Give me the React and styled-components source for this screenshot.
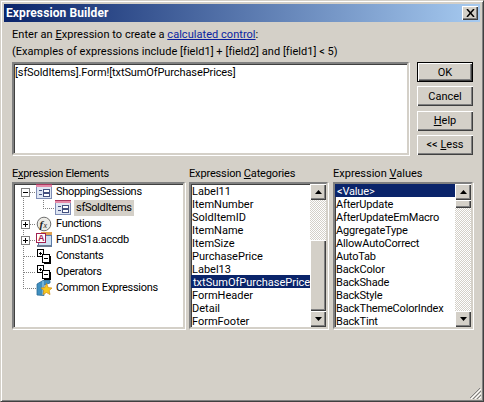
import React from "react";
import styled, { createGlobalStyle, css } from "styled-components";

const Global = createGlobalStyle`
  html, body { margin: 0; padding: 0; background: #d4d0c8; }
  #root { width: 484px; height: 402px; }
  * { box-sizing: border-box; }
`;

const sunken = css`
  border-style: solid;
  border-width: 2px;
  border-color: #808080 #d4d0c8 #d4d0c8 #808080;
  box-shadow: inset 1px 1px 0 #404040, 1px 1px 0 #fff, -1px -1px 0 0 #d4d0c8;
`;

const raised = css`
  background: #d4d0c8;
  border: 0;
  box-shadow: inset 1px 1px 0 #fff, inset -1px -1px 0 #404040, inset -2px -2px 0 #808080;
`;

const Window = styled.div`
  position: relative;
  width: 484px;
  height: 402px;
  display: flex;
  flex-direction: column;
  background: #d4d0c8;
  padding: 2px;
  border: 1px solid;
  border-color: #d4d0c8 #404040 #404040 #d4d0c8;
  box-shadow: inset 1px 1px 0 #fff, inset -1px -1px 0 #808080;
  font-family: Roboto, "Liberation Sans", sans-serif;
  font-size: 11px;
  color: #000;
`;

const TitleBar = styled.div`
  height: 18px;
  margin: 1px 1px 0 1px;
  padding: 0 2px;
  display: flex;
  align-items: center;
  justify-content: space-between;
  background: linear-gradient(90deg, #0a246a, #a6caf0);
`;

const Title = styled.span`
  color: #fff;
  font-weight: 700;
  font-size: 12px;
  letter-spacing: 0.1px;
`;

const CloseButton = styled.button`
  ${raised}
  width: 16px;
  height: 14px;
  padding: 0;
  display: flex;
  align-items: center;
  justify-content: center;
`;

const Content = styled.div`
  flex: 1;
  display: flex;
  flex-direction: column;
  padding: 4px 8px 0 9px;
`;

const Intro = styled.div`
  line-height: 17px;
  height: 17px;
  letter-spacing: 0.04px;
  white-space: nowrap;
`;

const U = styled.span`
  text-decoration: underline;
`;

const HelpLink = styled.span`
  color: #0a1fa0;
  text-decoration: underline;
`;

const TopRow = styled.div`
  margin-top: 2px;
  display: flex;
  justify-content: space-between;
  height: 93px;
`;

const Editor = styled.div`
  ${sunken}
  width: 397px;
  height: 93px;
  background: #fff;
  padding: 2px 1px;
  line-height: 13px;
  letter-spacing: -0.1px;
`;

const ButtonColumn = styled.div`
  width: 56px;
  display: flex;
  flex-direction: column;
  justify-content: space-between;
`;

const DialogButton = styled.button`
  ${raised}
  height: 20px;
  width: 56px;
  padding: 0;
  font: inherit;
  color: #000;
  ${(p) =>
    p.$primary &&
    css`
      box-shadow: inset 0 0 0 1px #000, inset 2px 2px 0 #fff, inset -2px -2px 0 #404040, inset -3px -3px 0 #808080;
    `}
`;

const Panels = styled.div`
  margin-top: 11px;
  display: grid;
  grid-template-columns: 173px 139px 140px;
  column-gap: 4px;
`;

const Panel = styled.div`
  display: flex;
  flex-direction: column;
  &:last-child {
    margin-left: 1px;
    width: 140px;
  }
`;

const PanelLabel = styled.div`
  height: 16px;
  line-height: 16px;
  letter-spacing: ${(p) => p.$tracking || 0}px;
  white-space: nowrap;
`;

const TreeBox = styled.div`
  ${sunken}
  height: 147px;
  background: #fff;
`;

const TreeRowWrap = styled.div`
  height: 16px;
  display: flex;
  align-items: center;
  white-space: nowrap;
`;

const Gutter = styled.svg`
  flex: none;
  display: block;
`;

const TreeLabel = styled.span`
  margin-left: 2px;
  padding: 0 2px;
  height: 16px;
  line-height: 16px;
  letter-spacing: -0.3px;
  background: ${(p) => (p.$selected ? "#d4d0c8" : "transparent")};
`;

const ListBox = styled.div`
  ${sunken}
  height: 147px;
  background: #fff;
  display: flex;
`;

const ListRows = styled.div`
  flex: 1;
  min-width: 0;
  letter-spacing: ${(p) => p.$tracking || 0}px;
`;

const ListRow = styled.div`
  height: 13px;
  line-height: 15px;
  padding-left: ${(p) => (p.$selected ? "2px" : "1px")};
  white-space: nowrap;
  background: ${(p) => (p.$selected ? "#0a246a" : "transparent")};
  color: ${(p) => (p.$selected ? "#fff" : "#000")};
`;

const Scrollbar = styled.div`
  flex: none;
  width: 16px;
  display: flex;
  flex-direction: column;
`;

const ScrollButton = styled.div`
  ${raised}
  flex: none;
  height: 16px;
  width: 16px;
  display: flex;
  align-items: center;
  justify-content: center;
`;

const Track = styled.div`
  flex: none;
  height: ${(p) => p.$size}px;
  background-image: conic-gradient(#fff 25%, #d4d0c8 0 50%, #fff 0 75%, #d4d0c8 0);
  background-size: 2px 2px;
`;

const Thumb = styled.div`
  ${raised}
  flex: none;
  width: 16px;
  height: ${(p) => p.$size}px;
`;

const Grip = styled.svg`
  position: absolute;
  right: 2px;
  bottom: 2px;
`;

const Line = ({ d }) => <path d={d} fill="none" stroke="#808080" strokeDasharray="1 1" shapeRendering="crispEdges" />;

const Expander = ({ x, y, minus }) => (
  <g shapeRendering="crispEdges">
    <rect x={x + 0.5} y={y + 0.5} width="8" height="8" fill="#fff" stroke="#808080" />
    <path d={`M${x + 2} ${y + 4.5}H${x + 7}`} stroke="#000" />
    {!minus && <path d={`M${x + 4.5} ${y + 2}V${y + 7}`} stroke="#000" />}
  </g>
);

const FormIcon = ({ x }) => (
  <g transform={`translate(${x} 0)`} shapeRendering="crispEdges">
    <rect x="0.5" y="0.5" width="15" height="14" fill="#dfe6f3" stroke="#7f8db5" />
    <rect x="0" y="0" width="16" height="1" fill="#a8365f" />
    <rect x="0" y="1" width="16" height="2" fill="#e48aa8" />
    <path d="M2.5 6.5h3M2.5 10.5h3" stroke="#44507f" />
    <rect x="7.5" y="5.5" width="6" height="3" fill="#fff" stroke="#44507f" />
    <rect x="7.5" y="9.5" width="6" height="3" fill="#fff" stroke="#44507f" />
  </g>
);

const FxIcon = ({ x }) => (
  <g transform={`translate(${x} 0)`}>
    <circle cx="8" cy="8" r="6.8" fill="#ecebe6" stroke="#6f6f6f" />
    <text x="3.6" y="11.5" fontFamily="Liberation Serif, serif" fontStyle="italic" fontWeight="700" fontSize="11" fill="#222">f</text>
    <text x="7.6" y="12" fontFamily="Liberation Serif, serif" fontStyle="italic" fontSize="8" fill="#222">x</text>
  </g>
);

const DbIcon = ({ x }) => (
  <g transform={`translate(${x} 0)`} shapeRendering="crispEdges">
    <rect x="5" y="0" width="11" height="3" fill="#e0a050" />
    <rect x="2.5" y="3.5" width="13" height="11" fill="#cfe0f2" stroke="#5a7aa8" />
    <rect x="0.5" y="1.5" width="9" height="9" fill="#fff" stroke="#a02050" />
    <text x="2" y="9.4" fontFamily="Liberation Sans, sans-serif" fontWeight="700" fontSize="9" fill="#a02050">A</text>
    <rect x="1" y="13" width="14" height="2" fill="#6c7a90" />
  </g>
);

const PairIcon = ({ x }) => (
  <g transform={`translate(${x} 0)`} shapeRendering="crispEdges">
    <rect x="1.5" y="1.5" width="6" height="7" fill="#fff" stroke="#000" />
    <path d="M3 5H6M4.5 3.5V6.5" stroke="#000" />
    <rect x="6.5" y="6.5" width="7" height="8" fill="#fff" stroke="#000" />
    <path d="M8 10.5H12M14.5 7.5V15.5H7.5" stroke="#000" fill="none" />
  </g>
);

const BookIcon = ({ x }) => (
  <g transform={`translate(${x} 0)`}>
    <path d="M1 4L7 0.5H14V3L8 5V15.5L1 15Z" fill="#3f8fc0" stroke="#2a6a96" strokeWidth="0.8" />
    <path d="M7 1V15" stroke="#a8d4ee" />
    <path d="M10.5 3.5L12.2 7.6L16 8L13.2 10.6L14 14.6L10.5 12.5L7 14.6L7.8 10.6L5 8L8.8 7.6Z" fill="#f6c81e" stroke="#d08a10" strokeWidth="0.7" />
  </g>
);

const treeRows = [
  { label: "ShoppingSessions", gutter: (
    <>
      <Line d="M9.5 12V16" />
      <Line d="M16 8.5H22" />
      <Expander x={7} y={4} minus />
      <FormIcon x={22} />
    </>
  ) },
  { label: "sfSoldItems", selected: true, gutter: (
    <>
      <Line d="M9.5 0V16" />
      <Line d="M29.5 0V8.5H41" />
      <FormIcon x={41} />
    </>
  ) },
  { label: "Functions", gutter: (
    <>
      <Line d="M9.5 0V16" />
      <Line d="M16 8.5H22" />
      <Expander x={7} y={4} />
      <FxIcon x={22} />
    </>
  ) },
  { label: "FunDS1a.accdb", gutter: (
    <>
      <Line d="M9.5 0V16" />
      <Line d="M16 8.5H22" />
      <Expander x={7} y={4} />
      <DbIcon x={22} />
    </>
  ) },
  { label: "Constants", gutter: (
    <>
      <Line d="M9.5 0V16M10 8.5H22" />
      <PairIcon x={22} />
    </>
  ) },
  { label: "Operators", gutter: (
    <>
      <Line d="M9.5 0V16M10 8.5H22" />
      <PairIcon x={22} />
    </>
  ) },
  { label: "Common Expressions", gutter: (
    <>
      <Line d="M9.5 0V8.5H22" />
      <BookIcon x={22} />
    </>
  ) },
];

const categories = ["Label11","ItemNumber","SoldItemID","ItemName","ItemSize","PurchasePrice","Label13","txtSumOfPurchasePrices","FormHeader","Detail","FormFooter"];
const values = ["<Value>","AfterUpdate","AfterUpdateEmMacro","AggregateType","AllowAutoCorrect","AutoTab","BackColor","BackShade","BackStyle","BackThemeColorIndex","BackTint"];

const Arrow = ({ down }) => (
  <svg width="7" height="4" viewBox="0 0 7 4">
    <path d={down ? "M0 0H7L3.5 4Z" : "M3.5 0L7 4H0Z"} fill="#000" />
  </svg>
);

const Bar = ({ before, thumb, after }) => (
  <Scrollbar>
    <ScrollButton><Arrow /></ScrollButton>
    <Track $size={before} />
    <Thumb $size={thumb} />
    <Track $size={after} />
    <ScrollButton><Arrow down /></ScrollButton>
  </Scrollbar>
);

const List = ({ items, selected, bar, tracking }) => (
  <ListBox>
    <ListRows $tracking={tracking}>
      {items.map((t) => (
        <ListRow key={t} $selected={t === selected}>{t}</ListRow>
      ))}
    </ListRows>
    {bar}
  </ListBox>
);

export default function App() {
  return (
    <Window>
      <Global />
      <TitleBar>
        <Title>Expression Builder</Title>
        <CloseButton aria-label="Close">
          <svg width="9" height="8" viewBox="0 0 9 8">
            <path d="M1 0L8 8M8 0L1 8" stroke="#000" strokeWidth="1.5" />
          </svg>
        </CloseButton>
      </TitleBar>
      <Content>
        <Intro>Enter an <U>E</U>xpression to create a <HelpLink>calculated control</HelpLink>:</Intro>
        <Intro>(Examples of expressions include [field1] + [field2] and [field1] &lt; 5)</Intro>
        <TopRow>
          <Editor>[sfSoldItems].Form![txtSumOfPurchasePrices]</Editor>
          <ButtonColumn>
            <DialogButton $primary>OK</DialogButton>
            <DialogButton>Cancel</DialogButton>
            <DialogButton><U>H</U>elp</DialogButton>
            <DialogButton>&lt;&lt; <U>L</U>ess</DialogButton>
          </ButtonColumn>
        </TopRow>
        <Panels>
          <Panel>
            <PanelLabel $tracking={-0.27}>E<U>x</U>pression Elements</PanelLabel>
            <TreeBox>
              {treeRows.map((r) => (
                <TreeRowWrap key={r.label}>
                  <Gutter width={r.selected ? 58 : 38} height="16" viewBox={`0 0 ${r.selected ? 58 : 38} 16`}>
                    {r.gutter}
                  </Gutter>
                  <TreeLabel $selected={r.selected}>{r.label}</TreeLabel>
                </TreeRowWrap>
              ))}
            </TreeBox>
          </Panel>
          <Panel>
            <PanelLabel $tracking={-0.15}>Expression <U>C</U>ategories</PanelLabel>
            <List items={categories} selected="txtSumOfPurchasePrices" bar={<Bar before={40} thumb={71} after={0} />} />
          </Panel>
          <Panel>
            <PanelLabel>Expression <U>V</U>alues</PanelLabel>
            <List tracking={-0.17} items={values} selected="<Value>" bar={<Bar before={0} thumb={8} after={103} />} />
          </Panel>
        </Panels>
      </Content>
      <Grip width="12" height="12" viewBox="0 0 12 12">
        <path d="M11 1L1 11M12 4L4 12M12 8L8 12" stroke="#808080" strokeWidth="1" />
        <path d="M12 2L2 12M12 6L6 12M12 10L10 12" stroke="#fff" strokeWidth="1" />
      </Grip>
    </Window>
  );
}
